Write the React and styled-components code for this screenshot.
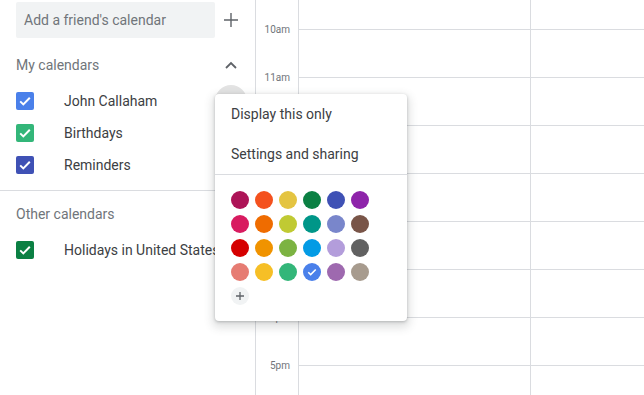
import React from "react";
import styled, { createGlobalStyle } from "styled-components";

const GlobalStyle = createGlobalStyle`
  html, body {
    margin: 0;
    padding: 0;
    background: #fff;
    font-family: Roboto, "Noto Sans", Arial, sans-serif;
    overflow: hidden;
  }
`;

const myCalendars = [
  { name: "John Callaham", color: "#4a80ea", hover: true },
  { name: "Birthdays", color: "#33b679" },
  { name: "Reminders", color: "#3f51b5" },
];

const otherCalendars = [{ name: "Holidays in United States", color: "#0b8043" }];

const hours = ["10am", "11am", "12pm", "1pm", "2pm", "3pm", "4pm", "5pm"];

const palette = [
  ["#ad1457", "#f4511e", "#e4c441", "#0b8043", "#3f51b5", "#8e24aa"],
  ["#d81b60", "#ef6c00", "#c0ca33", "#009688", "#7986cb", "#795548"],
  ["#d50000", "#f09300", "#7cb342", "#039be5", "#b39ddb", "#616161"],
  ["#e67c73", "#f6bf26", "#33b679", "#4a80ea", "#9e69af", "#a79b8e"],
];
const selectedIndex = 21;

const Check = ({ size = 18 }) => (
  <svg width={size} height={size} viewBox="0 0 18 18">
    <path d="M4.2 9.4l3.1 3L13.8 5.8" fill="none" stroke="#fff" strokeWidth="2" />
  </svg>
);

const App = () => {
  return (
    <>
      <GlobalStyle />
      <Page>
        <Sidebar>
          <SearchRow>
            <SearchBox>Add a friend's calendar</SearchBox>
            <IconButton>
              <svg width="14" height="14" viewBox="0 0 14 14">
                <path d="M7 0v14M0 7h14" stroke="#5f6368" strokeWidth="1.4" />
              </svg>
            </IconButton>
          </SearchRow>
          <SectionHeader>
            <span>My calendars</span>
            <IconButton>
              <svg width="12" height="8" viewBox="0 0 12 8">
                <path d="M1 7l5-5 5 5" fill="none" stroke="#5f6368" strokeWidth="1.8" />
              </svg>
            </IconButton>
          </SectionHeader>
          {myCalendars.map((c) => (
            <CalRow key={c.name}>
              <Box $color={c.color}>
                <Check />
              </Box>
              <CalName>{c.name}</CalName>
              {c.hover && <HoverDot />}
            </CalRow>
          ))}
          <Divider />
          <SectionHeader $tight>
            <span>Other calendars</span>
          </SectionHeader>
          {otherCalendars.map((c) => (
            <CalRow key={c.name}>
              <Box $color={c.color}>
                <Check />
              </Box>
              <CalName>{c.name}</CalName>
            </CalRow>
          ))}
        </Sidebar>

        <TimeColumn>
          {hours.map((h) => (
            <TimeLabel key={h}>{h}</TimeLabel>
          ))}
        </TimeColumn>

        <Grid>
          {[0, 1].map((d) => (
            <DayColumn key={d} $first={d === 0}>
              <HourCell $top />
              {hours.map((h) => (
                <HourCell key={h} />
              ))}
            </DayColumn>
          ))}
        </Grid>

        <Menu>
          <MenuItem>Display this only</MenuItem>
          <MenuItem>Settings and sharing</MenuItem>
          <MenuDivider />
          <Swatches>
            {palette.flat().map((col, i) => (
              <Swatch key={i} $color={col}>
                {i === selectedIndex ? <Check size={14} /> : null}
              </Swatch>
            ))}
            <AddSwatch>
              <svg width="8" height="8" viewBox="0 0 8 8">
                <path d="M4 0v8M0 4h8" stroke="#5f6368" strokeWidth="1.3" />
              </svg>
            </AddSwatch>
          </Swatches>
        </Menu>
      </Page>
    </>
  );
};

const Page = styled.div`
  position: relative;
  display: flex;
  width: 644px;
  height: 395px;
  overflow: hidden;
`;

const Sidebar = styled.div`
  width: 256px;
  flex-shrink: 0;
  box-sizing: border-box;
  border-right: 1px solid #dadce0;
  display: flex;
  flex-direction: column;
`;

const SearchRow = styled.div`
  display: flex;
  align-items: center;
  padding: 2px 8px 0 16px;
`;

const SearchBox = styled.div`
  width: 199px;
  height: 36px;
  box-sizing: border-box;
  background: #f1f3f4;
  border-radius: 2px;
  padding-left: 8px;
  display: flex;
  align-items: center;
  font-size: 14px;
  color: #70757a;
`;

const IconButton = styled.div`
  width: 32px;
  height: 32px;
  display: flex;
  align-items: center;
  justify-content: center;
`;

const SectionHeader = styled.div`
  display: flex;
  align-items: center;
  justify-content: space-between;
  height: 40px;
  margin-top: ${(p) => (p.$tight ? "3px" : "7px")};
  padding: 0 8px 0 16px;
  font-size: 14px;
  color: #70757a;
`;

const CalRow = styled.div`
  display: flex;
  align-items: center;
  height: 32px;
  padding: 0 8px 0 16px;
`;

const Box = styled.div`
  width: 18px;
  height: 18px;
  border-radius: 2px;
  background: ${(p) => p.$color};
  flex-shrink: 0;
  display: flex;
`;

const CalName = styled.div`
  margin-left: 30px;
  flex: 1;
  font-size: 14px;
  color: #3c4043;
  white-space: nowrap;
`;

const HoverDot = styled.div`
  width: 32px;
  height: 32px;
  border-radius: 50%;
  background: #e3e3e3;
  flex-shrink: 0;
`;

const Divider = styled.div`
  height: 1px;
  background: #dadce0;
  margin-top: 9px;
`;

const TimeColumn = styled.div`
  width: 42px;
  flex-shrink: 0;
  padding-top: 6px;
  display: flex;
  flex-direction: column;
`;

const TimeLabel = styled.div`
  height: 48px;
  line-height: 48px;
  padding-right: 8px;
  text-align: right;
  font-size: 10px;
  color: #70757a;
`;

const Grid = styled.div`
  flex: 1;
  display: flex;
  border-left: 1px solid #dadce0;
`;

const DayColumn = styled.div`
  flex: ${(p) => (p.$first ? "0 0 231px" : "1")};
  border-right: ${(p) => (p.$first ? "1px solid #dadce0" : "none")};
  display: flex;
  flex-direction: column;
`;

const HourCell = styled.div`
  height: ${(p) => (p.$top ? "30px" : "48px")};
  flex-shrink: 0;
  box-sizing: border-box;
  border-bottom: 1px solid #dadce0;
`;

const Menu = styled.div`
  position: absolute;
  left: 215px;
  top: 94px;
  width: 192px;
  box-sizing: border-box;
  background: #fff;
  border-radius: 4px;
  box-shadow: 0 4px 8px 3px rgba(60, 64, 67, 0.15), 0 1px 3px rgba(60, 64, 67, 0.3);
  padding-bottom: 16px;
`;

const MenuItem = styled.div`
  height: 40px;
  display: flex;
  align-items: center;
  padding-left: 16px;
  padding-bottom: 1px;
  box-sizing: border-box;
  font-size: 14px;
  color: #3c4043;
`;

const MenuDivider = styled.div`
  height: 1px;
  background: #dadce0;
`;

const Swatches = styled.div`
  display: grid;
  grid-template-columns: repeat(6, 18px);
  gap: 6px;
  padding: 16px 0 0 16px;
`;

const Swatch = styled.div`
  width: 18px;
  height: 18px;
  border-radius: 50%;
  background: ${(p) => p.$color};
  display: flex;
  align-items: center;
  justify-content: center;
`;

const AddSwatch = styled(Swatch)`
  background: #f1f3f4;
`;

export default App;
